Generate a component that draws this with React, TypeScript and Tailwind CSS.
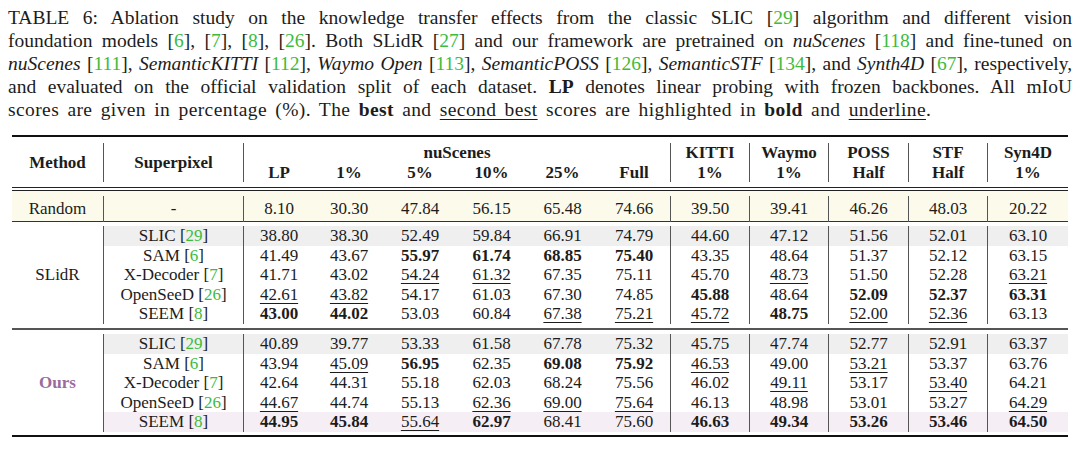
import React from "react"

const serif = "font-['Liberation_Serif','Times_New_Roman',serif]"
const cols = "grid-cols-[91px_140px_71px_70px_72px_71px_71px_72px_79px_79px_80px_79px_81px]"
const sepCols = [1, 2, 8, 9, 10, 11, 12]

const Ref = ({ n }: { n: string }) => (
  <>
    [<span className="text-[#3dbb3d]">{n}</span>]
  </>
)

type Row = { sp: string; refNo: string; vals: string[]; bg?: string }

const slidr: Row[] = [
  { sp: "SLIC", refNo: "29", bg: "bg-[#efefef]", vals: ["38.80", "38.30", "52.49", "59.84", "66.91", "74.79", "44.60", "47.12", "51.56", "52.01", "63.10"] },
  { sp: "SAM", refNo: "6", vals: ["41.49", "43.67", "*55.97", "*61.74", "*68.85", "*75.40", "43.35", "48.64", "51.37", "52.12", "63.15"] },
  { sp: "X-Decoder", refNo: "7", vals: ["41.71", "43.02", "_54.24", "_61.32", "67.35", "75.11", "45.70", "_48.73", "51.50", "52.28", "_63.21"] },
  { sp: "OpenSeeD", refNo: "26", vals: ["_42.61", "_43.82", "54.17", "61.03", "67.30", "74.85", "*45.88", "48.64", "*52.09", "*52.37", "*63.31"] },
  { sp: "SEEM", refNo: "8", vals: ["*43.00", "*44.02", "53.03", "60.84", "_67.38", "_75.21", "_45.72", "*48.75", "_52.00", "_52.36", "63.13"] },
]

const ours: Row[] = [
  { sp: "SLIC", refNo: "29", bg: "bg-[#efefef]", vals: ["40.89", "39.77", "53.33", "61.58", "67.78", "75.32", "45.75", "47.74", "52.77", "52.91", "63.37"] },
  { sp: "SAM", refNo: "6", vals: ["43.94", "_45.09", "*56.95", "62.35", "*69.08", "*75.92", "_46.53", "49.00", "_53.21", "53.37", "63.76"] },
  { sp: "X-Decoder", refNo: "7", vals: ["42.64", "44.31", "55.18", "62.03", "68.24", "75.56", "46.02", "_49.11", "53.17", "_53.40", "64.21"] },
  { sp: "OpenSeeD", refNo: "26", vals: ["_44.67", "44.74", "55.13", "_62.36", "_69.00", "_75.64", "46.13", "48.98", "53.01", "53.27", "_64.29"] },
  { sp: "SEEM", refNo: "8", bg: "bg-[#f6eef5]", vals: ["*44.95", "*45.84", "_55.64", "*62.97", "68.41", "75.60", "*46.63", "*49.34", "*53.26", "*53.46", "*64.50"] },
]

function Val({ v }: { v: string }) {
  if (v.startsWith("*")) return <span className="font-bold">{v.slice(1)}</span>
  if (v.startsWith("_"))
    return <span className="underline decoration-1 underline-offset-[3px]">{v.slice(1)}</span>
  return <span>{v}</span>
}

function Cell({ i, className = "", children }: { i: number; className?: string; children: React.ReactNode }) {
  const sep = sepCols.includes(i) ? "border-l border-[#555]" : ""
  return <div className={`flex items-center justify-center whitespace-nowrap ${sep} ${className}`}>{children}</div>
}

function BodyRow({ row }: { row: Row }) {
  const bg = row.bg ?? ""
  return (
    <>
      <Cell i={1} className={bg}>
        {row.sp}&nbsp;<Ref n={row.refNo} />
      </Cell>
      {row.vals.map((v, k) => (
        <Cell key={k} i={k + 2} className={bg}>
          <Val v={v} />
        </Cell>
      ))}
    </>
  )
}

function Group({ label, rows, labelClass, pb }: { label: string; rows: Row[]; labelClass?: string; pb: string }) {
  return (
    <div className={`pt-[4px] ${pb}`}>
      <div className={`grid ${cols} grid-rows-[repeat(5,19.6px)]`}>
        <div className={`row-span-5 flex items-center justify-center ${labelClass ?? ""}`}>{label}</div>
        {rows.map((r, k) => (
          <BodyRow key={k} row={r} />
        ))}
      </div>
    </div>
  )
}

function Caption() {
  const line = "whitespace-nowrap [text-align:justify] [text-align-last:justify]"
  return (
    <div className="ml-[8px] w-[1064px] pt-[6px] text-[19.5px] leading-[23px] text-[#1c1c1c]">
      <div className={line}>
        TABLE 6: Ablation study on the knowledge transfer effects from the classic SLIC <Ref n="29" /> algorithm and
        different vision
      </div>
      <div className={line}>
        foundation models <Ref n="6" />, <Ref n="7" />, <Ref n="8" />, <Ref n="26" />. Both SLidR <Ref n="27" /> and our
        framework are pretrained on <i>nuScenes</i> <Ref n="118" /> and fine-tuned on
      </div>
      <div className={line}>
        <i>nuScenes</i> <Ref n="111" />, <i>SemanticKITTI</i> <Ref n="112" />, <i>Waymo Open</i> <Ref n="113" />,{" "}
        <i>SemanticPOSS</i> <Ref n="126" />, <i>SemanticSTF</i> <Ref n="134" />, and <i>Synth4D</i> <Ref n="67" />,
        respectively,
      </div>
      <div className={line}>
        and evaluated on the official validation split of each dataset. <b>LP</b> denotes linear probing with frozen
        backbones. All mIoU
      </div>
      <div className="whitespace-nowrap tracking-[0.4px] [word-spacing:3px]">
        scores are given in percentage (%). The <b>best</b> and{" "}
        <span className="underline decoration-1 underline-offset-[3px]">second best</span> scores are highlighted in{" "}
        <b>bold</b> and <span className="underline decoration-1 underline-offset-[3px]">underline</span>.
      </div>
    </div>
  )
}

export default function App() {
  const randomVals = ["8.10", "30.30", "47.84", "56.15", "65.48", "74.66", "39.50", "39.41", "46.26", "48.03", "20.22"]
  const hdr = "flex flex-col items-center justify-center leading-[19.5px] font-bold"

  return (
    <div className={`w-[1080px] h-[450px] bg-white overflow-hidden ${serif} text-[#1c1c1c]`}>
      <Caption />

      <div className="ml-[12px] mt-[14px] w-[1056px] text-[17px]">
        <div className="h-[2px] bg-[#111]" />

        {/* header */}
        <div className="pt-[6px] pb-[5px]">
          <div className={`grid ${cols} grid-rows-[19.5px_19.5px] font-bold`}>
            <div className={`${hdr} row-span-2`}>Method</div>
            <div className={`${hdr} row-span-2 border-l border-[#555]`}>Superpixel</div>
            <div className={`${hdr} col-span-6 border-l border-[#555]`}>nuScenes</div>
            <div className={`${hdr} row-span-2 border-l border-[#555]`}>
              <span>KITTI</span>
              <span>1%</span>
            </div>
            <div className={`${hdr} row-span-2 border-l border-[#555]`}>
              <span>Waymo</span>
              <span>1%</span>
            </div>
            <div className={`${hdr} row-span-2 border-l border-[#555]`}>
              <span>POSS</span>
              <span>Half</span>
            </div>
            <div className={`${hdr} row-span-2 border-l border-[#555]`}>
              <span>STF</span>
              <span>Half</span>
            </div>
            <div className={`${hdr} row-span-2 border-l border-[#555]`}>
              <span>Syn4D</span>
              <span>1%</span>
            </div>
            {["LP", "1%", "5%", "10%", "25%", "Full"].map((h, k) => (
              <div key={h} className={`${hdr} ${k === 0 ? "border-l border-[#555]" : ""}`}>
                {h}
              </div>
            ))}
          </div>
        </div>

        <div className="h-[4px] border-y border-[#222]" />

        {/* random init */}
        <div className="bg-[#fcfaea] py-[5px]">
          <div className={`grid ${cols} h-[20px]`}>
            <Cell i={0}>Random</Cell>
            <Cell i={1}>-</Cell>
            {randomVals.map((v, k) => (
              <Cell key={k} i={k + 2}>
                {v}
              </Cell>
            ))}
          </div>
        </div>

        <div className="h-[1px] bg-[#333]" />

        <Group label="SLidR" rows={slidr} pb="pb-[4px]" />

        <div className="h-[2px] bg-[#555]" />

        <Group label="Ours" rows={ours} pb="pb-[3px]" labelClass="font-bold text-[#9a6b9c]" />

        <div className="h-[2px] bg-[#111]" />
      </div>
    </div>
  )
}
